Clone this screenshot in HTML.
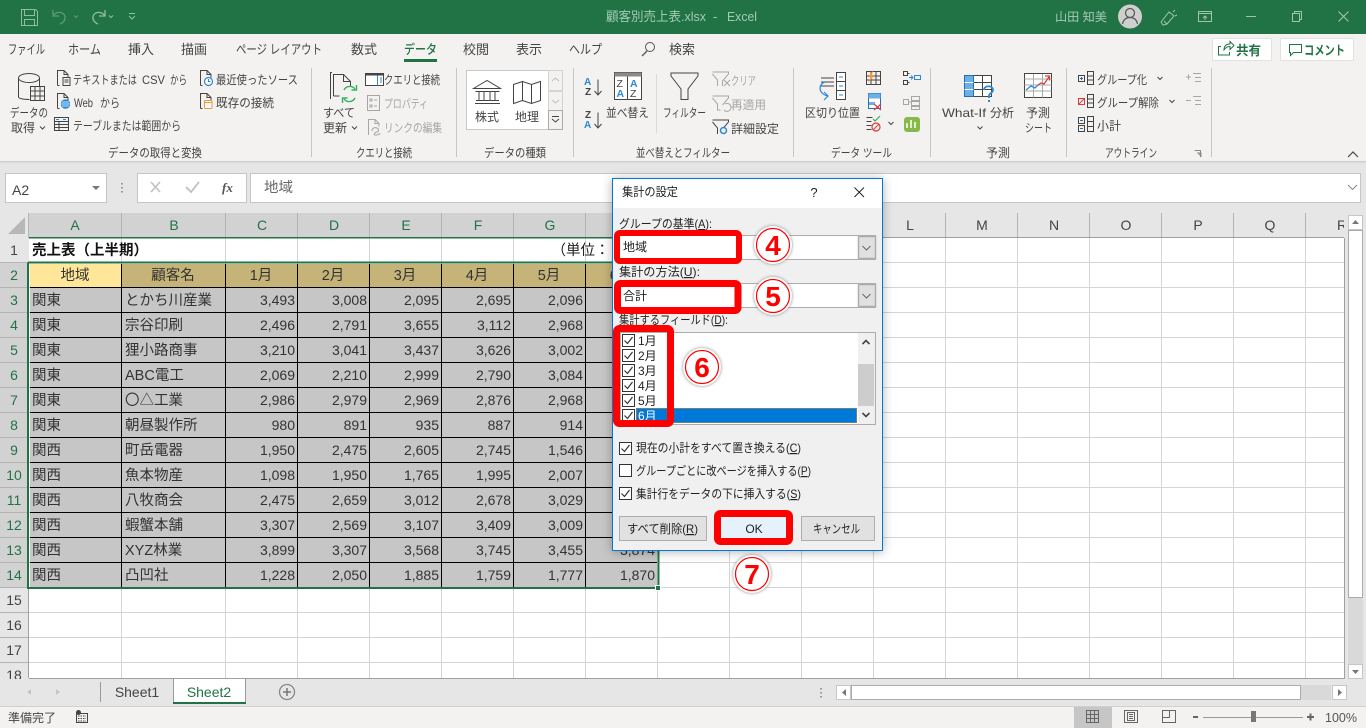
<!DOCTYPE html>
<html lang="ja"><head><meta charset="utf-8"><title>顧客別売上表.xlsx - Excel</title>
<style>
html,body{margin:0;padding:0;background:#e6e6e6;width:1366px;height:728px;overflow:hidden}
svg{position:absolute;left:0;top:0;display:block}
text{font-family:"Liberation Sans","Noto Sans CJK JP",sans-serif;font-size:12px;fill:#444}
.c{text-anchor:middle}.e{text-anchor:end}
.tb text{fill:#a3cbb3}
.tab text{font-size:13px;fill:#444}
.g text{fill:#a6a6a6}
.ln{fill:none;stroke:#444;stroke-width:1}
.bl{fill:none;stroke:#2b88d8;stroke-width:1}
.gy{fill:none;stroke:#a6a6a6;stroke-width:1}
.h text{font-size:14px;fill:#217346;text-anchor:middle}
.h2 text{font-size:14px;fill:#444;text-anchor:middle}
.d text{font-size:14.5px;fill:#333}
.n text{font-size:14px;fill:#333;text-anchor:end}
.dl text{fill:#222}
.u{text-decoration:underline}
</style></head><body>
<svg width="1366" height="728" viewBox="0 0 1366 728" xmlns="http://www.w3.org/2000/svg">
<defs>
<pattern id="hl" width="10" height="25" patternUnits="userSpaceOnUse" y="12"><rect y="0" width="10" height="1" fill="#d4d4d4"/></pattern>
<symbol id="chk" viewBox="0 0 13 13" width="13" height="13"><rect x=".5" y=".5" width="12" height="12" fill="#fff" stroke="#333"/><path d="M2.5 6.500l3 3 5-6.500" fill="none" stroke="#333" stroke-width="1.200"/></symbol>
<symbol id="doc" viewBox="0 0 14 16" width="14" height="16"><path d="M1.500 15.500V.5h6.500l4 4v3M8 .5v4h4M1.500 15.500h2" fill="none" stroke="#444"/></symbol>
</defs>

<!-- backgrounds -->
<rect width="1366" height="728" fill="#e6e6e6"/>
<rect width="1366" height="34" fill="#217346"/>
<rect y="34" width="1366" height="127" fill="#f3f2f1"/>
<rect y="161" width="1366" height="1" fill="#d0d0d0"/><rect y="162" width="1366" height="1" fill="#dcdcdc"/><rect y="163" width="1366" height="1" fill="#e2e2e2"/>

<!-- title bar -->
<g class="tb" fill="none" stroke="#8fbfa3">
<path d="M21.500 9.500h14l2 2v14h-16zM24.500 9.500v6h10v-6M24.500 25.500v-6h10v6"/>
<path d="M53 10v6h6M53 16c3-5 11-5 12 1 .5 3-2 6-5 7" stroke="#5e9a79" stroke-width="1.300"/>
<path d="M74 15.500l2 2 2-2" stroke="#5e9a79"/>
<path d="M105 10v6h-6M105 16c-3-5-11-5-12 1-.5 3 2 6 5 7" stroke-width="1.300"/>
<path d="M109 15.500l2 2 2-2"/>
<path d="M129 13.500h6M129 16l3 3 3-3"/>
<text x="606" y="21" stroke="none" textLength="100" lengthAdjust="spacingAndGlyphs" style="font-size:13px">顧客別売上表.xlsx</text>
<text x="713" y="21" stroke="none" style="font-size:13px">-</text>
<text x="727" y="21" stroke="none" textLength="30" lengthAdjust="spacingAndGlyphs" style="font-size:13px">Excel</text>
<text x="1055" y="21" stroke="none" textLength="52" lengthAdjust="spacingAndGlyphs">山田 知美</text>
</g>
<circle cx="1130" cy="16.500" r="12" fill="#cfcfcf"/>
<circle cx="1130" cy="13" r="4.500" fill="none" stroke="#555" stroke-width="1.200"/><path d="M1122.500 24c1-5 4-6.500 7.500-6.500s6.500 1.500 7.500 6.500" fill="none" stroke="#555" stroke-width="1.200"/>
<g fill="none" stroke="#9cc6ad">
<path d="M1161 22l8-10 5 4-7 8-4 1zM1164 21l3 3M1173 12l2-2M1175 16l2-1"/>
<rect x="1198.500" y="11.500" width="13" height="10"/><path d="M1198.500 13.500h13M1205 20v-4M1203 18l2-2 2 2"/>
<path d="M1246 16.500h10"/>
<path d="M1292.500 13.500h7v8h-7zM1294.500 13.500v-2h7v8h-2"/>
<path d="M1338.500 11.500l10 10M1348.500 11.500l-10 10" stroke-width="1.100"/>
</g>

<!-- tabs -->
<g class="tab">
<text x="8" y="54" textLength="37" lengthAdjust="spacingAndGlyphs">ファイル</text>
<text x="68" y="54" textLength="33" lengthAdjust="spacingAndGlyphs">ホーム</text>
<text x="128" y="54" textLength="26" lengthAdjust="spacingAndGlyphs">挿入</text>
<text x="181" y="54" textLength="26" lengthAdjust="spacingAndGlyphs">描画</text>
<text x="236" y="54" textLength="86" lengthAdjust="spacingAndGlyphs">ページ レイアウト</text>
<text x="351" y="54" textLength="26" lengthAdjust="spacingAndGlyphs">数式</text>
<text x="404" y="54" textLength="33" lengthAdjust="spacingAndGlyphs" style="fill:#217346;font-weight:500">データ</text>
<text x="463" y="54" textLength="26" lengthAdjust="spacingAndGlyphs">校閲</text>
<text x="516" y="54" textLength="26" lengthAdjust="spacingAndGlyphs">表示</text>
<text x="569" y="54" textLength="33" lengthAdjust="spacingAndGlyphs">ヘルプ</text>
<text x="669" y="54" textLength="26" lengthAdjust="spacingAndGlyphs">検索</text>
</g>
<rect x="404" y="59" width="33" height="3" fill="#217346"/>
<circle cx="650" cy="47" r="4.500" fill="none" stroke="#555"/><path d="M647 51l-5 5" stroke="#555" stroke-width="1.300"/>
<rect x="1212.500" y="38.500" width="59" height="22" fill="#fff" stroke="#e2e2e2"/>
<rect x="1280.500" y="38.500" width="73" height="22" fill="#fff" stroke="#e2e2e2"/>
<path d="M1221 46.500h-2.500v8.500h11v-3M1224 50c0-4 2-6 6-6v-2.500l4 4-4 4v-3c-3 0-4 1-6 3.500z" fill="none" stroke="#217346"/>
<text x="1236" y="55" style="font-size:13px;font-weight:700;fill:#217346" textLength="25" lengthAdjust="spacingAndGlyphs">共有</text>
<path d="M1289.500 44.500h12v8h-8l-3 3v-3h-1z" fill="none" stroke="#217346"/>
<text x="1304" y="55" style="font-size:13px;font-weight:700;fill:#217346" textLength="41" lengthAdjust="spacingAndGlyphs">コメント</text>

<!-- ribbon separators -->
<g fill="#c6c6c6"><rect x="311" y="68" width="1" height="89"/><rect x="456" y="68" width="1" height="89"/><rect x="573" y="68" width="1" height="89"/><rect x="793" y="68" width="1" height="89"/><rect x="930" y="68" width="1" height="89"/><rect x="1066" y="68" width="1" height="89"/><rect x="1211" y="68" width="1" height="89"/><rect x="656" y="74" width="1" height="59" fill="#dadada"/></g>

<!-- group labels -->
<text x="108" y="157" textLength="94" lengthAdjust="spacingAndGlyphs">データの取得と変換</text>
<text x="356" y="157" textLength="56" lengthAdjust="spacingAndGlyphs">クエリと接続</text>
<text x="484" y="157" textLength="62" lengthAdjust="spacingAndGlyphs">データの種類</text>
<text x="636" y="157" textLength="94" lengthAdjust="spacingAndGlyphs">並べ替えとフィルター</text>
<text x="831" y="157" textLength="61" lengthAdjust="spacingAndGlyphs">データ ツール</text>
<text x="986" y="157" textLength="24" lengthAdjust="spacingAndGlyphs">予測</text>
<text x="1105" y="157" textLength="52" lengthAdjust="spacingAndGlyphs">アウトライン</text>
<path d="M1200.500 157v-6.500h-6M1198 153l3 3v-3z" fill="none" stroke="#888"/><path d="M1348 157l5-5 5 5" fill="none" stroke="#444" stroke-width="1.200"/>

<!-- get data group -->
<path class="ln" d="M18.500 78v19c0 1 3 2.500 11 2.500M39.500 78v8"/><ellipse cx="29" cy="78" rx="10.500" ry="4.500" class="ln"/>
<rect x="30.500" y="86.500" width="14" height="14" fill="#f3f2f1" stroke="#444"/><path class="ln" d="M30.500 91h14M30.500 96h14M35 86.500v14M40 86.500v14"/>
<text x="10" y="117" textLength="38" lengthAdjust="spacingAndGlyphs">データの</text>
<text x="11" y="132" textLength="24" lengthAdjust="spacingAndGlyphs">取得</text><path class="ln" d="M40 126.500l2.500 2.500 2.500-2.500"/>
<use href="#doc" x="56" y="70"/><path class="ln" d="M63 77.500h7v8h-7zM64.500 80h4M64.500 82h4"/>
<text x="73" y="84" textLength="64" lengthAdjust="spacingAndGlyphs">テキストまたは</text><text x="142" y="84" textLength="23" lengthAdjust="spacingAndGlyphs">CSV</text><text x="170" y="84" textLength="17" lengthAdjust="spacingAndGlyphs">から</text>
<use href="#doc" x="56" y="93"/><circle cx="65.500" cy="104" r="4.800" fill="#2b88d8"/><path d="M60.500 104h10M62 102h7M62 106h7" stroke="#fff" stroke-width=".8"/>
<text x="74" y="107" textLength="19" lengthAdjust="spacingAndGlyphs">Web</text><text x="100" y="107" textLength="20" lengthAdjust="spacingAndGlyphs">から</text>
<rect x="54.500" y="117.500" width="14" height="13" fill="none" stroke="#444"/><path class="ln" d="M54.500 121.500h14M54.500 124.500h14M54.500 127.500h14M59 121.500v9"/><path d="M56 119.500h3M63 119.500h3" stroke="#2b88d8"/>
<text x="73" y="130" textLength="108" lengthAdjust="spacingAndGlyphs">テーブルまたは範囲から</text>
<use href="#doc" x="199" y="70"/><circle cx="208.500" cy="81.500" r="4" fill="#fff" stroke="#2b88d8" stroke-width="1.200"/><path d="M208.500 79v2.500h2" stroke="#2b88d8" fill="none"/>
<text x="216" y="84" textLength="82" lengthAdjust="spacingAndGlyphs">最近使ったソース</text>
<use href="#doc" x="199" y="93"/><rect x="204.500" y="100.500" width="7.500" height="8" rx="1" fill="#fff" stroke="#f2953c"/><path d="M204.500 102.500h7.500" stroke="#f2953c"/>
<text x="216" y="107" textLength="58" lengthAdjust="spacingAndGlyphs">既存の接続</text>

<!-- query group -->
<path class="ln" d="M330.500 99V72.500h1.500M333.500 96V74.500h10l7 7V86M343.500 74.500v7h7M333.500 96h6"/>
<path d="M344 90a6.500 6.500 0 0 1 11-1M355 98a6.500 6.500 0 0 1-11 1" fill="none" stroke="#33b05d" stroke-width="1.400"/><path d="M356.500 85v5h-5M342.500 103v-5h5" fill="none" stroke="#33b05d" stroke-width="1.400"/>
<text x="339" y="117" class="c" textLength="32" lengthAdjust="spacingAndGlyphs">すべて</text>
<text x="323" y="132" textLength="24" lengthAdjust="spacingAndGlyphs">更新</text><path class="ln" d="M352 126.500l2.500 2.500 2.500-2.500"/>
<rect x="365.500" y="73.500" width="18" height="12" fill="#fff" stroke="#444"/><rect x="365.500" y="73.500" width="18" height="2" fill="#444"/><path d="M377.500 75.500v10" stroke="#2b88d8"/><path d="M380 78h2M380 80h2M380 82h2" stroke="#2b88d8"/>
<text x="384" y="84" textLength="56" lengthAdjust="spacingAndGlyphs">クエリと接続</text>
<g class="g"><rect x="367.500" y="95.500" width="12" height="15" class="gy"/><path class="gy" d="M370 99h2v2h-2zM374 100h3M370 105h2v2h-2zM374 106h3"/>
<text x="384" y="108" textLength="44" lengthAdjust="spacingAndGlyphs">プロパティ</text>
<path class="gy" d="M368.500 135V119.500h6.500l4 4v3M375 119.500v4h4M372 131c0-3 3-4 5-3s2 4 0 4-4 3-2 3 5 0 5-2"/>
<text x="384" y="132" textLength="58" lengthAdjust="spacingAndGlyphs">リンクの編集</text></g>

<!-- data types gallery -->
<rect x="466.500" y="70.500" width="82" height="59" fill="#fff" stroke="#c8c8c8"/>
<path class="ln" d="M473.500 88.500l13.500-8 13.500 8zM475.500 91.500h24M476 100.500h23M475 103.500h25M479 91.500v9M484 91.500v9M490 91.500v9M495 91.500v9"/>
<path class="ln" d="M513.500 84.500l9-3v19l-9 3zM522.500 81.500l9 3 9-3v19l-9 3-9-3M531.500 84.500v19"/>
<text x="475" y="121" textLength="24" lengthAdjust="spacingAndGlyphs">株式</text>
<text x="515" y="121" textLength="24" lengthAdjust="spacingAndGlyphs">地理</text>
<rect x="548.500" y="70.500" width="14" height="20" fill="#f3f2f1" stroke="#d4d4d4"/><rect x="548.500" y="91.500" width="14" height="19" fill="#f3f2f1" stroke="#d4d4d4"/><rect x="548.500" y="110.500" width="14" height="19" fill="#f3f2f1" stroke="#aaa"/>
<path d="M552 81l3.500-3 3.500 3M552 100l3.500 3 3.500-3" fill="none" stroke="#bbb"/><path d="M552 116.500h7M552 119l3.500 3 3.500-3" fill="none" stroke="#444"/>

<!-- sort group -->
<text x="584" y="85" style="font-size:10px;font-weight:700;fill:#2b88d8">A</text><text x="585" y="95" style="font-size:10px;font-weight:700;fill:#444">Z</text><path class="ln" d="M598 79.500v15M594.500 91l3.500 4 3.500-4"/>
<text x="585" y="118" style="font-size:10px;font-weight:700;fill:#444">Z</text><text x="584" y="128" style="font-size:10px;font-weight:700;fill:#2b88d8">A</text><path class="ln" d="M598 112.500v15M594.500 124l3.500 4 3.500-4"/>
<rect x="614.500" y="72.500" width="27" height="27" fill="#fff" stroke="#444"/><rect x="614.500" y="72.500" width="27" height="4" fill="#8a8a8a"/><path class="ln" d="M627.500 76.500v23"/>
<text x="616.500" y="87" style="font-size:10.500px;fill:#444">Z</text><text x="616.500" y="97" style="font-size:10.500px;font-weight:700;fill:#2b88d8">A</text><text x="630" y="87" style="font-size:10.500px;font-weight:700;fill:#2b88d8">A</text><text x="630" y="97" style="font-size:10.500px;fill:#444">Z</text>
<text x="606" y="117" textLength="43" lengthAdjust="spacingAndGlyphs">並べ替え</text>
<path class="ln" d="M671 73h27v3l-10 13v10.500h-7V89l-10-13z"/>
<text x="663" y="117" textLength="43" lengthAdjust="spacingAndGlyphs">フィルター</text>
<g class="g"><path class="gy" d="M712.500 72h16v2l-6 7v5M712.500 74l5 6v6"/><path class="gy" d="M724 80l6 6M730 80l-6 6"/>
<text x="731" y="85" textLength="25" lengthAdjust="spacingAndGlyphs">クリア</text>
<path class="gy" d="M712.500 96h16v2l-6 7M712.500 98l5 6v6h3M725 104a4 4 0 1 1-1 6"/>
<text x="731" y="109" textLength="35" lengthAdjust="spacingAndGlyphs">再適用</text></g>
<path class="ln" d="M712.500 120h16v2l-5 6M712.500 122l5 6v6"/><circle cx="723.500" cy="130.500" r="3" fill="none" stroke="#2b88d8" stroke-width="1.500"/>
<text x="731" y="133" textLength="48" lengthAdjust="spacingAndGlyphs">詳細設定</text>

<!-- data tools -->
<path class="ln" d="M821 78h13M821 82h13M821 86h13"/><path d="M825 86c-7 2-7 12 3 14M824 96l4 4-4 4" fill="none" stroke="#2b88d8" stroke-width="1.200" transform="translate(0,-4)"/>
<rect x="836.500" y="72.500" width="9" height="27" fill="#fff" stroke="#444"/><path class="ln" d="M836.500 81.500h9M836.500 90.500h9"/><path d="M839 77h4M839 86h4M839 95h4" stroke="#2b88d8"/>
<text x="805" y="117" textLength="55" lengthAdjust="spacingAndGlyphs">区切り位置</text>
<rect x="866.500" y="71.500" width="14" height="13" fill="none" stroke="#444"/><path class="ln" d="M866.500 76h14M866.500 80h14M871 71.500v13M876 71.500v13"/><path d="M873 70l-5 7h3l-3 6 7-8h-3z" fill="#f2953c"/>
<rect x="868.500" y="93.500" width="12" height="15" fill="#fff" stroke="#1f6fb5"/><rect x="868.500" y="93.500" width="12" height="5" fill="#6cb0e6"/><rect x="869" y="102" width="6" height="3" fill="#6cb0e6"/><path d="M874 104l7 6M881 104l-7 6" stroke="#e03a3a" stroke-width="1.200"/>
<path class="ln" d="M866.500 117.500h6M866.500 121.500h5M866.500 125.500h5M866.500 129.500h5"/><path d="M873 119l2 2 5-5" fill="none" stroke="#33b05d" stroke-width="1.200"/><circle cx="876" cy="127" r="4" fill="none" stroke="#e03a3a" stroke-width="1.200"/><path d="M873 130l6-6" stroke="#e03a3a"/>
<path class="ln" d="M888.500 122l2.500 2.500 2.500-2.500"/>
<path class="ln" d="M903.500 71.500h4v4h-4zM903.500 80.500h4v4h-4zM907.500 73.500h2M907.500 82.500h2"/><rect x="914.500" y="75.500" width="6" height="4" fill="none" stroke="#2b88d8"/><path d="M909 77.500h4M911 75.500l2 2-2 2" fill="none" stroke="#2b88d8"/>
<path class="gy" d="M903.500 99.500h5v5h-5zM908.500 102h3M911.500 96.500h8v4h-8zM911.500 101.500h8v4h-8zM911.500 106.500h8v3h-8z"/>
<rect x="904" y="117" width="16" height="15" rx="3" fill="#85b94a"/><path d="M907 128v-5M911 128v-8M915 128v-6" stroke="#fff" stroke-width="1.500"/>

<!-- forecast -->
<rect x="964.500" y="75.500" width="27" height="21" fill="#fff" stroke="#444"/><rect x="964.500" y="75.500" width="9" height="21" fill="#6cb0e6" stroke="#1f6fb5"/><path class="ln" d="M973.500 82.500h18M973.500 89.500h18M982.500 75.500v21"/><path d="M964.500 82.500h9M964.500 89.500h9" stroke="#fff"/>
<path d="M984 90c0-5 9-5 9 0 0 3-4 3-4 6v2" fill="none" stroke="#2b88d8" stroke-width="1.800"/><rect x="988" y="100" width="2" height="2" fill="#2b88d8"/>
<text x="942" y="117" textLength="44" lengthAdjust="spacingAndGlyphs">What-If</text><text x="990" y="117" textLength="24" lengthAdjust="spacingAndGlyphs">分析</text><path class="ln" d="M977.500 126.500l2.500 2.500 2.500-2.500"/>
<rect x="1024.500" y="73.500" width="27" height="24" fill="#fff" stroke="#444"/><path d="M1024.500 79h27M1024.500 85h27M1024.500 91h27M1033.500 73.500v24M1042.500 73.500v24" stroke="#aaa" fill="none"/><path class="ln" d="M1024.500 73.500h27"/>
<path d="M1026 90l5-4 4 2 3-3" fill="none" stroke="#2b88d8" stroke-width="1.300"/><path d="M1038 85l3-2 3 1 5-7M1045 76h4.500v4.500" fill="none" stroke="#e03a3a" stroke-width="1.300"/>
<text x="1026" y="117" textLength="24" lengthAdjust="spacingAndGlyphs">予測</text>
<text x="1025" y="132" textLength="27" lengthAdjust="spacingAndGlyphs">シート</text>

<!-- outline -->
<rect x="1078.500" y="75.500" width="6" height="6" fill="none" stroke="#444"/><path d="M1080 78.500h3M1081.500 77v3" stroke="#1f6fb5"/><path class="ln" d="M1087.500 71.500h6v13h-6zM1087.500 76h6M1087.500 80h6"/>
<text x="1097" y="84" textLength="50" lengthAdjust="spacingAndGlyphs">グループ化</text><path class="ln" d="M1157.500 77l2.500 2.500 2.500-2.500"/>
<rect x="1078.500" y="98.500" width="6" height="6" fill="none" stroke="#e03a3a"/><path d="M1079 104l5-5" stroke="#e03a3a"/><path class="ln" d="M1087.500 94.500h6v13h-6zM1087.500 99h6M1087.500 103h6"/>
<text x="1097" y="107" textLength="62" lengthAdjust="spacingAndGlyphs">グループ解除</text><path class="ln" d="M1169.500 100l2.500 2.500 2.500-2.500"/>
<rect x="1078.500" y="117.500" width="6" height="6" fill="none" stroke="#444"/><rect x="1078.500" y="125.500" width="6" height="6" fill="none" stroke="#444"/><path d="M1080 120.500h3M1080 128.500h3" stroke="#1f6fb5"/><path class="ln" d="M1087.500 116.500h6v15h-6zM1087.500 121.500h6M1087.500 126.500h6"/>
<text x="1097" y="130" textLength="24" lengthAdjust="spacingAndGlyphs">小計</text>
<path class="gy" d="M1186 77h5M1188.500 74.500v5M1193 73.500h8M1195 77.500h6M1195 81.500h6"/>
<path class="gy" d="M1186 100.500h5M1193 96.500h8M1195 100.500h6M1195 104.500h6"/>

<!-- formula bar -->
<rect x="5.500" y="173.500" width="101" height="29" fill="#fff" stroke="#c6c6c6"/>
<text x="12" y="195" style="font-size:14px;fill:#444">A2</text><path d="M92 186h8l-4 4z" fill="#777"/>
<path d="M122 183v1.500M122 187v1.500M122 191v1.500" stroke="#999" stroke-width="2" fill="none"/>
<rect x="137.500" y="173.500" width="109" height="29" fill="#fff" stroke="#c6c6c6"/>
<path d="M151 182l9 10M160 182l-9 10" stroke="#c0c0c0" stroke-width="1.600" fill="none"/><path d="M186 187l5 5 8-10" stroke="#c0c0c0" stroke-width="1.800" fill="none"/>
<text x="222" y="192" style="font-family:'Liberation Serif',serif;font-style:italic;font-size:13px;font-weight:700;fill:#555">fx</text>
<rect x="250.500" y="173.500" width="1110" height="29" fill="#fff" stroke="#c6c6c6"/>
<text x="264" y="192" style="font-size:14px;fill:#666" textLength="29" lengthAdjust="spacingAndGlyphs">地域</text>
<path d="M1348 185l4.500 4.500 4.500-4.500" fill="none" stroke="#888"/>

<!-- grid -->
<rect x="0" y="213" width="1344" height="25" fill="#e6e6e6"/>
<rect x="29" y="213" width="629" height="24" fill="#d2d2d2"/>
<rect x="0" y="238" width="28" height="440" fill="#e6e6e6"/>
<rect x="0" y="263" width="28" height="325" fill="#d2d2d2"/>
<path d="M8 234L25 217V234z" fill="#b7b7b7"/>
<rect x="29" y="238" width="1315" height="440" fill="#fff"/>
<rect x="29" y="238" width="1315" height="440" fill="url(#hl)"/>
<g stroke="#d4d4d4" fill="none"><path d="M121.500 238V678M225.500 238V678M297.500 238V678M369.500 238V678M441.500 238V678M513.500 238V678M585.500 238V678M657.500 238V678M729.500 238V678M801.500 238V678M873.500 238V678M945.500 238V678M1017.500 238V678M1089.500 238V678M1161.500 238V678M1233.500 238V678M1305.500 238V678"/></g>
<g stroke="#b4b4b4" fill="none"><path d="M28.500 213V238M121.500 213V237M225.500 213V237M297.500 213V237M369.500 213V237M441.500 213V237M513.500 213V237M585.500 213V237M657.500 213V237M729.500 213V237M801.500 213V237M873.500 213V237M945.500 213V237M1017.500 213V237M1089.500 213V237M1161.500 213V237M1233.500 213V237M1305.500 213V237"/>
<path d="M0 262.500H28M0 287.500H28M0 312.500H28M0 337.500H28M0 362.500H28M0 387.500H28M0 412.500H28M0 437.500H28M0 462.500H28M0 487.500H28M0 512.500H28M0 537.500H28M0 562.500H28M0 587.500H28M0 612.500H28M0 637.500H28M0 662.500H28"/></g>
<path d="M658 237.500H1344.500V678.500H29M28.500 588V678" stroke="#a0a0a0" fill="none"/>

<!-- data fill -->
<rect x="30" y="264" width="627" height="323" fill="#c6c6c6"/>
<rect x="30" y="264" width="92" height="23" fill="#ffe699"/>
<rect x="122" y="264" width="535" height="23" fill="#c6b378"/>
<path d="M121.500 264V587M225.500 264V587M297.500 264V587M369.500 264V587M441.500 264V587M513.500 264V587M585.500 264V587" stroke="#000" fill="none"/>
<path d="M30 287.500H657M30 312.500H657M30 337.500H657M30 362.500H657M30 387.500H657M30 412.500H657M30 437.500H657M30 462.500H657M30 487.500H657M30 512.500H657M30 537.500H657M30 562.500H657" stroke="#000" fill="none"/>
<rect x="29" y="237" width="629" height="1.500" fill="#217346"/>
<path d="M28 262.500H658.500V588H28V262.500" fill="none" stroke="#217346" stroke-width="2"/>
<rect x="655.500" y="585.500" width="5" height="5" fill="#217346" stroke="#fff"/>

<!-- headers -->
<g class="h"><text x="75" y="230">A</text><text x="174" y="230">B</text><text x="262" y="230">C</text><text x="334" y="230">D</text><text x="406" y="230">E</text><text x="478" y="230">F</text><text x="550" y="230">G</text><text x="622" y="230">H</text></g>
<g class="h2"><text x="694" y="230">I</text><text x="766" y="230">J</text><text x="838" y="230">K</text><text x="910" y="230">L</text><text x="982" y="230">M</text><text x="1054" y="230">N</text><text x="1126" y="230">O</text><text x="1198" y="230">P</text><text x="1270" y="230">Q</text><text x="1342" y="230">R</text></g>
<rect x="1344" y="213" width="22" height="25" fill="#e6e6e6"/>
<g class="h2"><text x="14" y="255">1</text><text x="14" y="605">15</text><text x="14" y="630">16</text><text x="14" y="655">17</text><text x="14" y="680">18</text></g>
<g class="h"><text x="14" y="280">2</text><text x="14" y="305">3</text><text x="14" y="330">4</text><text x="14" y="355">5</text><text x="14" y="380">6</text><text x="14" y="405">7</text><text x="14" y="430">8</text><text x="14" y="455">9</text><text x="14" y="480">10</text><text x="14" y="505">11</text><text x="14" y="530">12</text><text x="14" y="555">13</text><text x="14" y="580">14</text></g>

<!-- cell text -->
<g class="d">
<text x="32" y="255" style="font-weight:700;fill:#111">売上表（上半期）</text>
<text x="551.500" y="255" style="fill:#222">（単位：</text>
<text x="75" y="280" class="c">地域</text><text x="173" y="280" class="c">顧客名</text>
<text x="261" y="280" class="c">1月</text><text x="333" y="280" class="c">2月</text><text x="405" y="280" class="c">3月</text><text x="477" y="280" class="c">4月</text><text x="549" y="280" class="c">5月</text><text x="621" y="280" class="c">6月</text>
<text x="32" y="305">関東</text><text x="32" y="330">関東</text><text x="32" y="355">関東</text><text x="32" y="380">関東</text><text x="32" y="405">関東</text><text x="32" y="430">関東</text>
<text x="32" y="455">関西</text><text x="32" y="480">関西</text><text x="32" y="505">関西</text><text x="32" y="530">関西</text><text x="32" y="555">関西</text><text x="32" y="580">関西</text>
<text x="125" y="305">とかち川産業</text><text x="125" y="330">宗谷印刷</text><text x="125" y="355">狸小路商事</text><text x="125" y="380">ABC電工</text><text x="125" y="405">〇△工業</text><text x="125" y="430">朝昼製作所</text>
<text x="125" y="455">町岳電器</text><text x="125" y="480">魚本物産</text><text x="125" y="505">八牧商会</text><text x="125" y="530">蝦蟹本舗</text><text x="125" y="555">XYZ林業</text><text x="125" y="580">凸凹社</text>
</g>
<g class="n">
<text x="295" y="305">3,493</text><text x="295" y="330">2,496</text><text x="295" y="355">3,210</text><text x="295" y="380">2,069</text><text x="295" y="405">2,986</text><text x="295" y="430">980</text><text x="295" y="455">1,950</text><text x="295" y="480">1,098</text><text x="295" y="505">2,475</text><text x="295" y="530">3,307</text><text x="295" y="555">3,899</text><text x="295" y="580">1,228</text>
<text x="367" y="305">3,008</text><text x="367" y="330">2,791</text><text x="367" y="355">3,041</text><text x="367" y="380">2,210</text><text x="367" y="405">2,979</text><text x="367" y="430">891</text><text x="367" y="455">2,475</text><text x="367" y="480">1,950</text><text x="367" y="505">2,659</text><text x="367" y="530">2,569</text><text x="367" y="555">3,307</text><text x="367" y="580">2,050</text>
<text x="439" y="305">2,095</text><text x="439" y="330">3,655</text><text x="439" y="355">3,437</text><text x="439" y="380">2,999</text><text x="439" y="405">2,969</text><text x="439" y="430">935</text><text x="439" y="455">2,605</text><text x="439" y="480">1,765</text><text x="439" y="505">3,012</text><text x="439" y="530">3,107</text><text x="439" y="555">3,568</text><text x="439" y="580">1,885</text>
<text x="511" y="305">2,695</text><text x="511" y="330">3,112</text><text x="511" y="355">3,626</text><text x="511" y="380">2,790</text><text x="511" y="405">2,876</text><text x="511" y="430">887</text><text x="511" y="455">2,745</text><text x="511" y="480">1,995</text><text x="511" y="505">2,678</text><text x="511" y="530">3,409</text><text x="511" y="555">3,745</text><text x="511" y="580">1,759</text>
<text x="583" y="305">2,096</text><text x="583" y="330">2,968</text><text x="583" y="355">3,002</text><text x="583" y="380">3,084</text><text x="583" y="405">2,968</text><text x="583" y="430">914</text><text x="583" y="455">1,546</text><text x="583" y="480">2,007</text><text x="583" y="505">3,029</text><text x="583" y="530">3,009</text><text x="583" y="555">3,455</text><text x="583" y="580">1,777</text>
<text x="655" y="555">3,874</text><text x="655" y="580">1,870</text>
</g>

<!-- vertical scrollbar -->
<rect x="1346" y="213" width="20" height="466" fill="#e6e6e6"/>
<rect x="1348" y="230" width="15" height="434" fill="#d9d9d9"/>
<rect x="1348.500" y="215.500" width="14" height="14" fill="#fff" stroke="#c6c6c6"/><path d="M1352 224h7l-3.500-4z" fill="#777"/>
<rect x="1348.500" y="230.500" width="14" height="367" fill="#fff" stroke="#ababab"/>
<rect x="1348.500" y="664.500" width="14" height="14" fill="#fff" stroke="#c6c6c6"/><path d="M1352 670h7l-3.500 4z" fill="#777"/>

<!-- sheet tabs -->
<rect y="679" width="1366" height="28" fill="#e6e6e6"/>
<path d="M31 689v6l-4-3zM56 689v6l4-3z" fill="#c6c6c6"/>
<path d="M100.500 682v20" stroke="#999"/>
<text x="137" y="697" class="c" style="font-size:14px;fill:#444">Sheet1</text>
<path d="M173.500 678.500V702M245.500 678.500V702" stroke="#999"/>
<rect x="174" y="679" width="71" height="23" fill="#fff"/><rect x="173" y="702" width="73" height="2" fill="#217346"/>
<text x="209" y="697" class="c" style="font-size:14px;fill:#217346">Sheet2</text>
<circle cx="287" cy="692" r="7.500" fill="none" stroke="#888" stroke-width="1.300"/><path d="M287 688v8M283 692h8" stroke="#777" stroke-width="1.500"/>
<path d="M821 688v1.500M821 692v1.500M821 696v1.500" stroke="#999" stroke-width="2"/>
<rect x="836.500" y="685.500" width="14" height="14" fill="#fff" stroke="#c6c6c6"/><path d="M846 689v7l-4-3.500z" fill="#777"/>
<rect x="851.500" y="685.500" width="449" height="14" fill="#fff" stroke="#ababab"/>
<rect x="1301" y="685" width="30" height="15" fill="#d9d9d9"/>
<rect x="1332.500" y="685.500" width="14" height="14" fill="#fff" stroke="#c6c6c6"/><path d="M1338 689v7l4-3.500z" fill="#777"/>

<!-- status bar -->
<rect y="706" width="1366" height="1" fill="#d0d0d0"/><rect y="707" width="1366" height="21" fill="#f3f2f1"/>
<text x="8" y="722" style="fill:#444" textLength="48" lengthAdjust="spacingAndGlyphs">準備完了</text>
<circle cx="78.500" cy="712.500" r="2.500" fill="#444"/><rect x="76.500" y="713.500" width="11" height="9" fill="none" stroke="#444"/><path d="M78 716h8M78 718.500h8M78 721h8" stroke="#444" stroke-dasharray="1.500 1"/>
<rect x="1074" y="707" width="38" height="21" fill="#c6c6c6"/>
<rect x="1086.500" y="710.500" width="12" height="12" fill="none" stroke="#666"/><path d="M1086.500 714.500h12M1086.500 718.500h12M1090.500 710.500v12M1094.500 710.500v12" stroke="#666" fill="none"/>
<rect x="1124.500" y="710.500" width="13" height="12" fill="none" stroke="#666"/><rect x="1127.500" y="712.500" width="7" height="8" fill="none" stroke="#666"/><path d="M1129 714.500h4M1129 716.500h4M1129 718.500h4" stroke="#666"/>
<path d="M1162.500 710.500h13v12h-13zM1162.500 717.500h7v-7" fill="none" stroke="#666"/>
<path d="M1193 717h5" stroke="#666" stroke-width="2"/>
<rect x="1203" y="717" width="100" height="1" fill="#999"/>
<rect x="1251" y="711" width="5" height="11" fill="#777"/>
<path d="M1307 717h7M1310.500 713.500v7" stroke="#666" stroke-width="2"/>
<text x="1325" y="722" style="font-size:12.500px;fill:#555">100%</text>

<!-- dialog -->
<g style="filter:drop-shadow(0 1px 5px rgba(0,0,0,.3))"><rect x="612.500" y="178.500" width="270" height="372" fill="#f0f0f0" stroke="#0078d7"/></g>
<rect x="613" y="179" width="269" height="29" fill="#fff"/>
<g class="dl">
<text x="622" y="196" textLength="56" lengthAdjust="spacingAndGlyphs">集計の設定</text>
<text x="814" y="197" class="c" style="font-size:13px">?</text>
<path d="M854.500 187.500l9.500 9.500M864 187.500l-9.500 9.500" stroke="#222" fill="none"/>
<text x="619" y="228" textLength="93" lengthAdjust="spacingAndGlyphs">グループの基準(<tspan class="u">A</tspan>):</text>
<rect x="620.500" y="235.500" width="255" height="24" fill="#fff" stroke="#acacac"/><rect x="858.500" y="236.500" width="17" height="22" fill="#e0e0e0" stroke="#adadad" stroke-width="1.500"/><path d="M862.500 246l4 4 4-4" fill="none" stroke="#666"/>
<text x="619" y="276" textLength="81" lengthAdjust="spacingAndGlyphs">集計の方法(<tspan class="u">U</tspan>):</text>
<rect x="620.500" y="283.500" width="255" height="24" fill="#fff" stroke="#acacac"/><rect x="858.500" y="284.500" width="17" height="22" fill="#e0e0e0" stroke="#adadad" stroke-width="1.500"/><path d="M862.500 294l4 4 4-4" fill="none" stroke="#666"/>
<text x="619" y="324" textLength="109" lengthAdjust="spacingAndGlyphs">集計するフィールド(<tspan class="u">D</tspan>):</text>
<rect x="620.500" y="332.500" width="255" height="92" fill="#fff" stroke="#acacac"/>
<rect x="858" y="333" width="17" height="91" fill="#f0f0f0"/><rect x="858" y="364" width="16" height="42" fill="#cdcdcd"/>
<path d="M862.500 344l3.500-3.500 3.500 3.500M862.500 413l3.500 3.500 3.500-3.500" fill="none" stroke="#444" stroke-width="1.600"/>
<rect x="636" y="408" width="221" height="15" fill="#0078d7"/><rect x="636.500" y="408.500" width="220" height="14" fill="none" stroke="#e08a1e" stroke-dasharray="1 1" stroke-width="1"/>
<use href="#chk" x="622" y="334"/><use href="#chk" x="622" y="349"/><use href="#chk" x="622" y="364"/><use href="#chk" x="622" y="379"/><use href="#chk" x="622" y="394"/><use href="#chk" x="622" y="409"/>
<text x="638" y="345">1月</text><text x="638" y="360">2月</text><text x="638" y="375">3月</text><text x="638" y="390">4月</text><text x="638" y="405">5月</text><text x="638" y="420" style="fill:#fff">6月</text>
<use href="#chk" x="619" y="442"/><rect x="619.500" y="464.500" width="12" height="12" fill="#fff" stroke="#333"/><use href="#chk" x="619" y="487"/>
<text x="636" y="452" textLength="165" lengthAdjust="spacingAndGlyphs">現在の小計をすべて置き換える(<tspan class="u">C</tspan>)</text>
<text x="636" y="475" textLength="175" lengthAdjust="spacingAndGlyphs">グループごとに改ページを挿入する(<tspan class="u">P</tspan>)</text>
<text x="636" y="498" textLength="165" lengthAdjust="spacingAndGlyphs">集計行をデータの下に挿入する(<tspan class="u">S</tspan>)</text>
<rect x="619.500" y="516.500" width="87" height="24" fill="#e1e1e1" stroke="#adadad"/>
<text x="627" y="533" textLength="71" lengthAdjust="spacingAndGlyphs">すべて削除(<tspan class="u">R</tspan>)</text>
<rect x="801.500" y="516.500" width="73" height="24" fill="#e1e1e1" stroke="#adadad"/>
<text x="813" y="533" textLength="47" lengthAdjust="spacingAndGlyphs">キャンセル</text>
</g>

<!-- annotations -->
<rect x="617" y="233" width="122" height="28" rx="3" fill="#fff" stroke="#f00" stroke-width="6"/>
<text x="623" y="251" class="dl" style="fill:#222">地域</text>
<rect x="617.500" y="283.500" width="120.500" height="27" rx="3" fill="#fff" stroke="#f00" stroke-width="7"/>
<text x="623" y="300" style="fill:#222">合計</text>
<rect x="616.500" y="328.500" width="54" height="95" rx="3" fill="none" stroke="#f00" stroke-width="7"/>
<rect x="717.500" y="513.500" width="72" height="28" rx="3" fill="#e5f1fb" stroke="#f00" stroke-width="7"/>
<text x="754" y="533" class="c" style="fill:#222">OK</text>
<g style="filter:drop-shadow(0 0 1.500px #888)">
<circle cx="773" cy="245" r="19" fill="#fff"/><circle cx="752" cy="574" r="19" fill="#fff"/><circle cx="773" cy="296" r="19" fill="#fff"/><circle cx="702" cy="367" r="19" fill="#fff"/>
</g>
<g fill="none" stroke="#f00" stroke-width="1.200"><circle cx="773" cy="245" r="16.500"/><circle cx="773" cy="296" r="16.500"/><circle cx="702" cy="367" r="16.500"/><circle cx="752" cy="574" r="16.500"/></g>
<g class="c" style="font-weight:700">
<text x="773" y="255" style="font-size:28px;font-weight:700;fill:#f00;text-anchor:middle">4</text>
<text x="773" y="306" style="font-size:28px;font-weight:700;fill:#f00;text-anchor:middle">5</text>
<text x="702" y="377" style="font-size:28px;font-weight:700;fill:#f00;text-anchor:middle">6</text>
<text x="752" y="584" style="font-size:28px;font-weight:700;fill:#f00;text-anchor:middle">7</text>
</g>
</svg>
</body></html>
